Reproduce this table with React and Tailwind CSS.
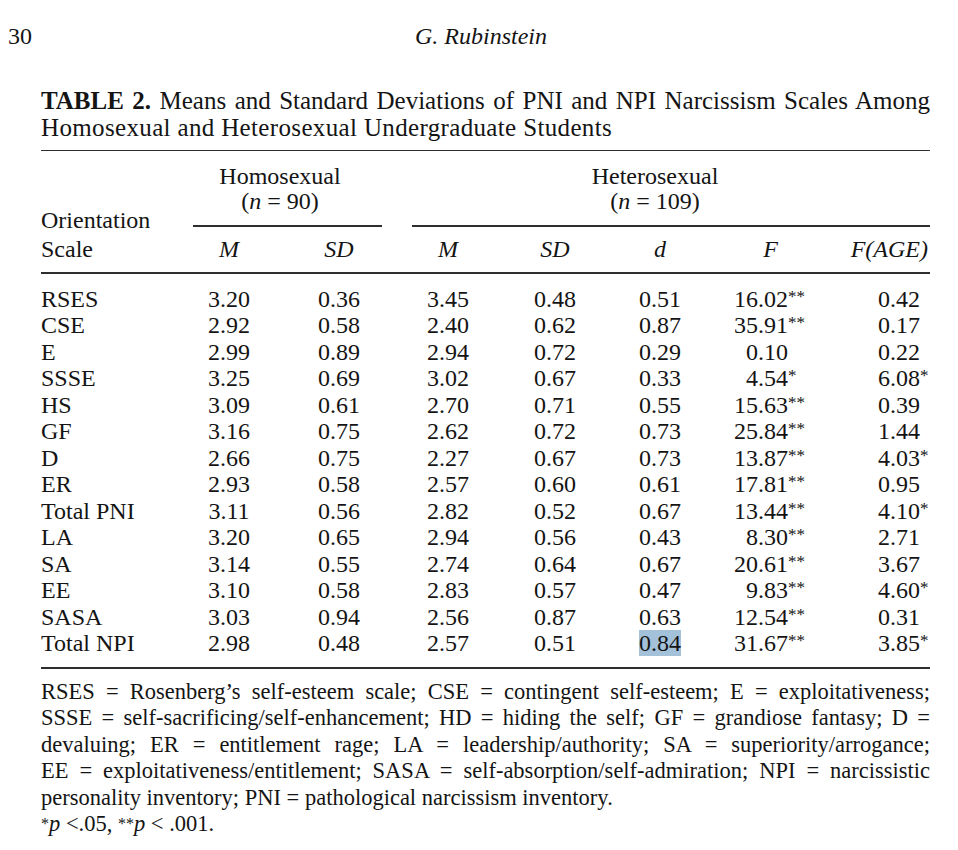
import React from "react";

const rows = [
  ["RSES", "3.20", "0.36", "3.45", "0.48", "0.51", "16.02", "**", "0.42", ""],
  ["CSE", "2.92", "0.58", "2.40", "0.62", "0.87", "35.91", "**", "0.17", ""],
  ["E", "2.99", "0.89", "2.94", "0.72", "0.29", "0.10", "", "0.22", ""],
  ["SSSE", "3.25", "0.69", "3.02", "0.67", "0.33", "4.54", "*", "6.08", "*"],
  ["HS", "3.09", "0.61", "2.70", "0.71", "0.55", "15.63", "**", "0.39", ""],
  ["GF", "3.16", "0.75", "2.62", "0.72", "0.73", "25.84", "**", "1.44", ""],
  ["D", "2.66", "0.75", "2.27", "0.67", "0.73", "13.87", "**", "4.03", "*"],
  ["ER", "2.93", "0.58", "2.57", "0.60", "0.61", "17.81", "**", "0.95", ""],
  ["Total PNI", "3.11", "0.56", "2.82", "0.52", "0.67", "13.44", "**", "4.10", "*"],
  ["LA", "3.20", "0.65", "2.94", "0.56", "0.43", "8.30", "**", "2.71", ""],
  ["SA", "3.14", "0.55", "2.74", "0.64", "0.67", "20.61", "**", "3.67", ""],
  ["EE", "3.10", "0.58", "2.83", "0.57", "0.47", "9.83", "**", "4.60", "*"],
  ["SASA", "3.03", "0.94", "2.56", "0.87", "0.63", "12.54", "**", "0.31", ""],
  ["Total NPI", "2.98", "0.48", "2.57", "0.51", "0.84", "31.67", "**", "3.85", "*"],
];

const notes = [
  "RSES = Rosenberg’s self-esteem scale; CSE = contingent self-esteem; E = exploitativeness;",
  "SSSE = self-sacrificing/self-enhancement; HD = hiding the self; GF = grandiose fantasy; D =",
  "devaluing; ER = entitlement rage; LA = leadership/authority; SA = superiority/arrogance;",
  "EE = exploitativeness/entitlement; SASA = self-absorption/self-admiration; NPI = narcissistic",
];

function Stars({ s }) {
  if (!s) return null;
  return <span className="relative -top-[2px] text-[17px]">{s}</span>;
}

function Rule() {
  return <div className="h-[1.5px] bg-[#2e2e2e]" />;
}

export default function App() {
  return (
    <div className="min-h-screen bg-white text-[#141414] font-['Liberation_Serif','Times_New_Roman',serif]">
      <div className="flex pl-2 pt-[21px] text-[24px] leading-[30px]">
        <span>30</span>
        <span className="ml-[383px] italic">G. Rubinstein</span>
      </div>

      <div className="ml-[41px] w-[889px] mt-[35.5px]">
        <div className="text-[25px] leading-[27px]">
          <div className="text-justify [text-align-last:justify]">
            <b>TABLE 2.</b> Means and Standard Deviations of PNI and NPI Narcissism Scales Among
          </div>
          <div className="tracking-[0.35px]">Homosexual and Heterosexual Undergraduate Students</div>
        </div>

        <div className="mt-[9px] text-[24px]">
          <Rule />
          <div className="flex pt-[13px] pb-[8px]">
            <div className="w-[152px] flex flex-col justify-end leading-[29px]">
              <div>Orientation</div>
              <div>Scale</div>
            </div>
            <div className="flex-1 flex flex-col">
              <div className="flex leading-[25px]">
                <div className="w-[220px] flex flex-col">
                  <div className="text-center pr-[46px]">
                    <div>Homosexual</div>
                    <div>
                      (<i>n</i> = 90)
                    </div>
                  </div>
                  <div className="mt-[11px] mr-[31px] h-[1.5px] bg-[#2e2e2e]" />
                </div>
                <div className="flex-1 flex flex-col">
                  <div className="text-center pr-[33px]">
                    <div>Heterosexual</div>
                    <div>
                      (<i>n</i> = 109)
                    </div>
                  </div>
                  <div className="mt-[11px] ml-[-1px] h-[1.5px] bg-[#2e2e2e]" />
                </div>
              </div>
              <div className="flex mt-[8.5px] leading-[29px] italic">
                <div className="w-[72px] text-center">M</div>
                <div className="w-[148px] text-center">SD</div>
                <div className="w-[70px] text-center">M</div>
                <div className="w-[144px] text-center">SD</div>
                <div className="w-[66px] text-center">d</div>
                <div className="w-[147px] text-center pl-[8px]">F</div>
                <div className="w-[90px] text-right pr-[2px]">F(AGE)</div>
              </div>
            </div>
          </div>
          <Rule />

          <div className="pt-[12px] pb-[10.5px] leading-[26.5px]">
            {rows.map((r) => (
              <div key={r[0]} className="flex">
                <div className="w-[152px]">{r[0]}</div>
                <div className="w-[72px] text-center">{r[1]}</div>
                <div className="w-[148px] text-center">{r[2]}</div>
                <div className="w-[70px] text-center">{r[3]}</div>
                <div className="w-[144px] text-center">{r[4]}</div>
                <div className="w-[66px] text-center">
                  {r[0] === "Total NPI" ? (
                    <span className="bg-[#a4c1da]">{r[5]}</span>
                  ) : (
                    r[5]
                  )}
                </div>
                <div className="w-[147px] flex">
                  <span className="w-[95px] text-right">{r[6]}</span>
                  <Stars s={r[7]} />
                </div>
                <div className="w-[90px] pl-[38px] flex">
                  <span>{r[8]}</span>
                  <Stars s={r[9]} />
                </div>
              </div>
            ))}
          </div>
          <Rule />
        </div>

        <div className="pt-[10px] text-[22.5px] leading-[26.6px]">
          {notes.map((n) => (
            <div key={n} className="text-justify [text-align-last:justify]">
              {n}
            </div>
          ))}
          <div>personality inventory; PNI = pathological narcissism inventory.</div>
          <div>
            <span className="relative -top-[2px] text-[16px]">*</span>
            <i>p</i> &lt;.05, <span className="relative -top-[2px] text-[16px]">**</span>
            <i>p</i> &lt; .001.
          </div>
        </div>
      </div>
    </div>
  );
}
